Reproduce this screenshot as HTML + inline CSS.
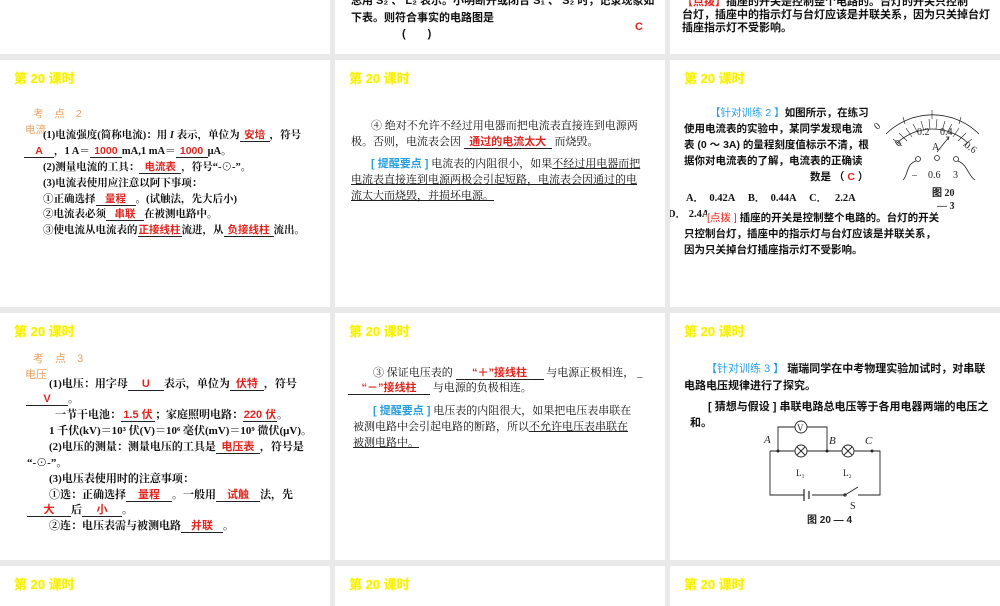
<!DOCTYPE html>
<html><head><meta charset="utf-8">
<style>
*{margin:0;padding:0;box-sizing:border-box}
body{width:1000px;height:600px;background:#e9e9e9;position:relative;overflow:hidden;font-family:"Liberation Serif","Noto Serif CJK SC",serif;color:#111}
.s{position:absolute;background:#fff;overflow:hidden}
.t{position:absolute;left:14px;top:8px;font:bold 13px "Liberation Sans","Noto Sans CJK SC",sans-serif;color:#f7f000;text-shadow:0 0 2px #fffa80}
.l{position:absolute;white-space:nowrap;font-size:11px;line-height:14px}
.b{font-weight:bold}
.r{color:#e0261f;font-family:"Liberation Sans","Noto Sans CJK SC",sans-serif}
.u{text-decoration:underline;text-decoration-color:#222}
.bl{display:inline-block;border-bottom:1px solid #222;text-align:center;line-height:12px}
.c{color:#28a0e0;font-weight:bold;font-family:"Liberation Sans","Noto Sans CJK SC",sans-serif}
.o{color:#e8a060;font-family:"Liberation Sans","Noto Sans CJK SC",sans-serif}
.sans{font-family:"Liberation Sans","Noto Sans CJK SC",sans-serif}
.f105 .l{font-size:10.5px}
</style></head><body>

<!-- row 0 -->
<div class="s" style="left:0;top:0;width:330px;height:54px"></div>
<div class="s" style="left:335px;top:0;width:330px;height:54px">
 <div class="l b sans" style="left:16px;top:-6px">总用 S₂ 、 L₂ 表示。小明断开或闭合 S₁ 、 S₂ 时，记录现象如</div>
 <div class="l b sans" style="left:16px;top:11px">下表。则符合事实的电路图是</div>
 <div class="l b sans" style="left:67px;top:27px">(　　)</div>
 <div class="l b r" style="left:300px;top:20px">C</div>
</div>
<div class="s" style="left:670px;top:0;width:330px;height:54px">
 <div class="l b sans" style="left:12px;top:-5px"><span style="color:#e0261f">【点拨】</span>插座的开关是控制整个电路的。台灯的开关只控制</div>
 <div class="l b sans" style="left:12px;top:8px">台灯，插座中的指示灯与台灯应该是并联关系，因为只关掉台灯</div>
 <div class="l b sans" style="left:12px;top:21px">插座指示灯不受影响。</div>
</div>

<!-- row 1 -->
<div class="s f105" style="left:0;top:60px;width:330px;height:247px">
 <div class="t">第 20 课时</div>
 <div class="l o" style="left:33px;top:47px;letter-spacing:4px">考 点 2</div>
 <div class="l o" style="left:25px;top:63px">电流</div>
 <div class="l b" style="left:43px;top:69px">(1)电流强度(简称电流)：用 <i>I</i> 表示，单位为<span class="bl r" style="width:30px">安培</span>，符号</div>
 <div class="l b" style="left:24px;top:85px"><span class="bl r" style="width:30px">A</span>，1 A＝<span class="bl r" style="width:32px">1000</span>mA,1 mA＝<span class="bl r" style="width:32px">1000</span>μA。</div>
 <div class="l b" style="left:43px;top:101px">(2)测量电流的工具：<span class="bl r" style="width:42px">电流表</span>，符号“-⊙-”。</div>
 <div class="l b" style="left:43px;top:117px">(3)电流表使用应注意以阿下事项：</div>
 <div class="l b" style="left:43px;top:133px">①正确选择<span class="bl r" style="width:40px">量程</span>。(试触法，先大后小)</div>
 <div class="l b" style="left:43px;top:148px">②电流表必须<span class="bl r" style="width:38px">串联</span>在被测电路中。</div>
 <div class="l b" style="left:43px;top:164px">③使电流从电流表的<span class="bl r" style="width:44px">正接线柱</span>流进，从<span class="bl r" style="width:50px">负接线柱</span>流出。</div>
</div>
<div class="s" style="left:335px;top:60px;width:330px;height:247px">
 <div class="t">第 20 课时</div>
 <div class="l" style="left:36px;top:59px">④ 绝对不允许不经过用电器而把电流表直接连到电源两</div>
 <div class="l" style="left:16px;top:75px">极。否则，电流表会因 <span class="bl r b" style="width:88px">通过的电流太大</span> 而烧毁。</div>
 <div class="l" style="left:36px;top:97px"><span class="c">[ 提醒要点 ]</span> 电流表的内阻很小，如果<span class="u">不经过用电器而把</span></div>
 <div class="l u" style="left:16px;top:113px">电流表直接连到电源两极会引起短路，电流表会因通过的电</div>
 <div class="l u" style="left:16px;top:129px">流太大而烧毁，并损坏电源。</div>
</div>
<div class="s f105" style="left:670px;top:60px;width:330px;height:247px">
 <div class="t">第 20 课时</div>
 <div class="l b sans" style="left:40px;top:46px"><span style="color:#28a0e0;font-weight:normal">【针对训练 2 】</span>如图所示，在练习</div>
 <div class="l b sans" style="left:14px;top:62px">使用电流表的实验中，某同学发现电流</div>
 <div class="l b sans" style="left:14px;top:78px">表 (0 ～ 3A) 的量程刻度值标示不清，根</div>
 <div class="l b sans" style="left:14px;top:94px">据你对电流表的了解，电流表的正确读</div>
 <div class="l b sans" style="left:140px;top:110px">数是 （ <span class="r">C</span> ）</div>
 <div class="l b" style="left:16px;top:132px">A．&nbsp; 0.42A &nbsp; &nbsp; B． &nbsp;0.44A &nbsp; &nbsp; C． &nbsp; 2.2A</div>
 <div class="l b" style="left:-2px;top:148px">D． 2.4A</div>
 <div class="l b sans" style="left:37px;top:151px;background:#fff"><span style="color:#e0261f;font-weight:normal">[点拨 ]</span> 插座的开关是控制整个电路的。台灯的开关</div>
 <div class="l b sans" style="left:14px;top:167px">只控制台灯，插座中的指示灯与台灯应该是并联关系，</div>
 <div class="l b sans" style="left:14px;top:183px">因为只关掉台灯插座指示灯不受影响。</div>
 <svg style="position:absolute;left:200px;top:40px" width="130" height="120" viewBox="870 100 130 120" font-family="Liberation Serif" font-size="10" fill="none" stroke="#222" stroke-width="0.8">
  <path d="M886 134 A66 66 0 0 1 979 134"/>
  <path d="M897 143 A52 52 0 0 1 968 143"/>
  <g stroke-width="0.6">
   <path d="M893 139 L902 146 M899 133 L907 141 M906 128 L912 137 M913 124 L918 133 M921 121 L924 131 M929 119 L930 129 M937 119 L936 129 M945 121 L942 131 M952 124 L947 133 M959 128 L953 137 M966 133 L958 141 M972 139 L963 146"/>
   <path d="M903 117 L905 124 M932 110 L932 119 M961 117 L959 124"/>
  </g>
  <path d="M937 152 L949 137" /><path d="M946 137 L949 137 L948 140"/>
  <g fill="#222" stroke="none">
   <text x="875" y="128" transform="rotate(-40 879 126)">0</text>
   <text x="896" y="145" transform="rotate(-40 900 143)">0</text>
   <text x="917" y="135">0.2</text>
   <text x="940" y="135">0.4</text>
   <text x="965" y="150" transform="rotate(35 970 146)">0.6</text>
   <text x="932" y="150">A</text>
   <text x="912" y="178">–</text><text x="928" y="178">0.6</text><text x="953" y="178">3</text>
   <text x="932" y="196" font-weight="bold">图 20</text>
   <text x="937" y="209" font-weight="bold">— 3</text>
  </g>
  <circle cx="918" cy="159" r="2.5"/><circle cx="937" cy="158" r="2.5"/><circle cx="956" cy="159" r="2.5"/>
  <path d="M916 161 C906 164 908 176 903 180"/><path d="M958 161 C968 165 968 176 975 180"/>
 </svg>
</div>

<!-- row 2 -->
<div class="s" style="left:0;top:313px;width:330px;height:247px">
 <div class="t">第 20 课时</div>
 <div class="l o" style="left:33px;top:39px;letter-spacing:4px">考 点 3</div>
 <div class="l o" style="left:25px;top:55px">电压</div>
 <div class="l b" style="left:49px;top:64px">(1)电压：用字母<span class="bl r" style="width:36px">U</span>表示，单位为<span class="bl r" style="width:34px">伏特</span>，符号</div>
 <div class="l b" style="left:26px;top:79px"><span class="bl r" style="width:42px">V</span>。</div>
 <div class="l b" style="left:55px;top:95px">一节干电池：<span class="bl r" style="width:34px">1.5 伏</span>；家庭照明电路：<span class="bl r" style="width:34px">220 伏</span>。</div>
 <div class="l b" style="left:49px;top:111px">1 千伏(kV)＝10³ 伏(V)＝10⁶ 毫伏(mV)＝10⁹ 微伏(μV)。</div>
 <div class="l b" style="left:49px;top:127px">(2)电压的测量：测量电压的工具是<span class="bl r" style="width:44px">电压表</span>，符号是</div>
 <div class="l b" style="left:27px;top:143px">“-⊙-”。</div>
 <div class="l b" style="left:49px;top:159px">(3)电压表使用时的注意事项：</div>
 <div class="l b" style="left:49px;top:175px">①选：正确选择<span class="bl r" style="width:46px">量程</span>。一般用<span class="bl r" style="width:44px">试触</span>法，先</div>
 <div class="l b" style="left:27px;top:190px"><span class="bl r" style="width:44px">大</span>后<span class="bl r" style="width:40px">小</span>。</div>
 <div class="l b" style="left:49px;top:206px">②连：电压表需与被测电路<span class="bl r" style="width:42px">并联</span>。</div>
</div>
<div class="s" style="left:335px;top:313px;width:330px;height:247px">
 <div class="t">第 20 课时</div>
 <div class="l" style="left:38px;top:53px">③ 保证电压表的 <span class="bl r b" style="width:88px">“＋”接线柱</span> 与电源正极相连， _</div>
 <div class="l" style="left:13px;top:68px"><span class="bl r b" style="width:82px">“－”接线柱</span> 与电源的负极相连。</div>
 <div class="l" style="left:38px;top:91px"><span class="c">[ 提醒要点 ]</span> 电压表的内阻很大，如果把电压表串联在</div>
 <div class="l" style="left:18px;top:107px">被测电路中会引起电路的断路，所以<span class="u">不允许电压表串联在</span></div>
 <div class="l u" style="left:18px;top:123px">被测电路中。</div>
</div>
<div class="s" style="left:670px;top:313px;width:330px;height:247px">
 <div class="t">第 20 课时</div>
 <div class="l b sans" style="left:36px;top:49px"><span style="color:#28a0e0;font-weight:normal">【针对训练 3 】</span> 瑞瑞同学在中考物理实验加试时，对串联</div>
 <div class="l b sans" style="left:14px;top:66px">电路电压规律进行了探究。</div>
 <div class="l b sans" style="left:38px;top:87px">[ 猜想与假设 ] 串联电路总电压等于各用电器两端的电压之</div>
 <div class="l b sans" style="left:20px;top:103px">和。</div>
 <svg style="position:absolute;left:90px;top:100px" width="130" height="120" viewBox="760 413 130 120" font-family="Liberation Serif" font-size="11" fill="none" stroke="#222" stroke-width="0.9">
  <path d="M778 451 L778 427 L795 427 M807 427 L827 427 L827 451"/>
  <circle cx="801" cy="427" r="6"/>
  <path d="M770 451 L795 451 M807 451 L842 451 M854 451 L880 451 L880 495 L858 495 M845 495 L812 495 M804 495 L770 495 L770 451"/>
  <circle cx="801" cy="451" r="6"/><path d="M797 447 L805 455 M805 447 L797 455"/>
  <circle cx="848" cy="451" r="6"/><path d="M844 447 L852 455 M852 447 L844 455"/>
  <path d="M804 489 L804 501 M809 491 L809 499" stroke-width="1.2"/>
  <path d="M845 495 L858 487"/><circle cx="845" cy="495" r="1.2"/>
  <g fill="#222" stroke="none">
   <circle cx="778" cy="451" r="1.5"/><circle cx="827" cy="451" r="1.5"/><circle cx="872" cy="451" r="1.5"/>
   <text x="797" y="431" font-size="9">V</text>
   <text x="764" y="443" font-style="italic">A</text>
   <text x="829" y="444" font-style="italic">B</text>
   <text x="865" y="444" font-style="italic">C</text>
   <text x="796" y="476" font-size="9">L₁</text><text x="843" y="476" font-size="9">L₂</text>
   <text x="850" y="509" font-size="10">S</text>
   <text x="807" y="523" font-size="10" font-weight="bold" font-family="Liberation Sans,Noto Sans CJK SC,sans-serif">图 20 — 4</text>
  </g>
 </svg>
</div>

<!-- row 3 -->
<div class="s" style="left:0;top:566px;width:330px;height:40px"><div class="t">第 20 课时</div></div>
<div class="s" style="left:335px;top:566px;width:330px;height:40px"><div class="t">第 20 课时</div></div>
<div class="s" style="left:670px;top:566px;width:330px;height:40px"><div class="t">第 20 课时</div></div>
</body></html>
